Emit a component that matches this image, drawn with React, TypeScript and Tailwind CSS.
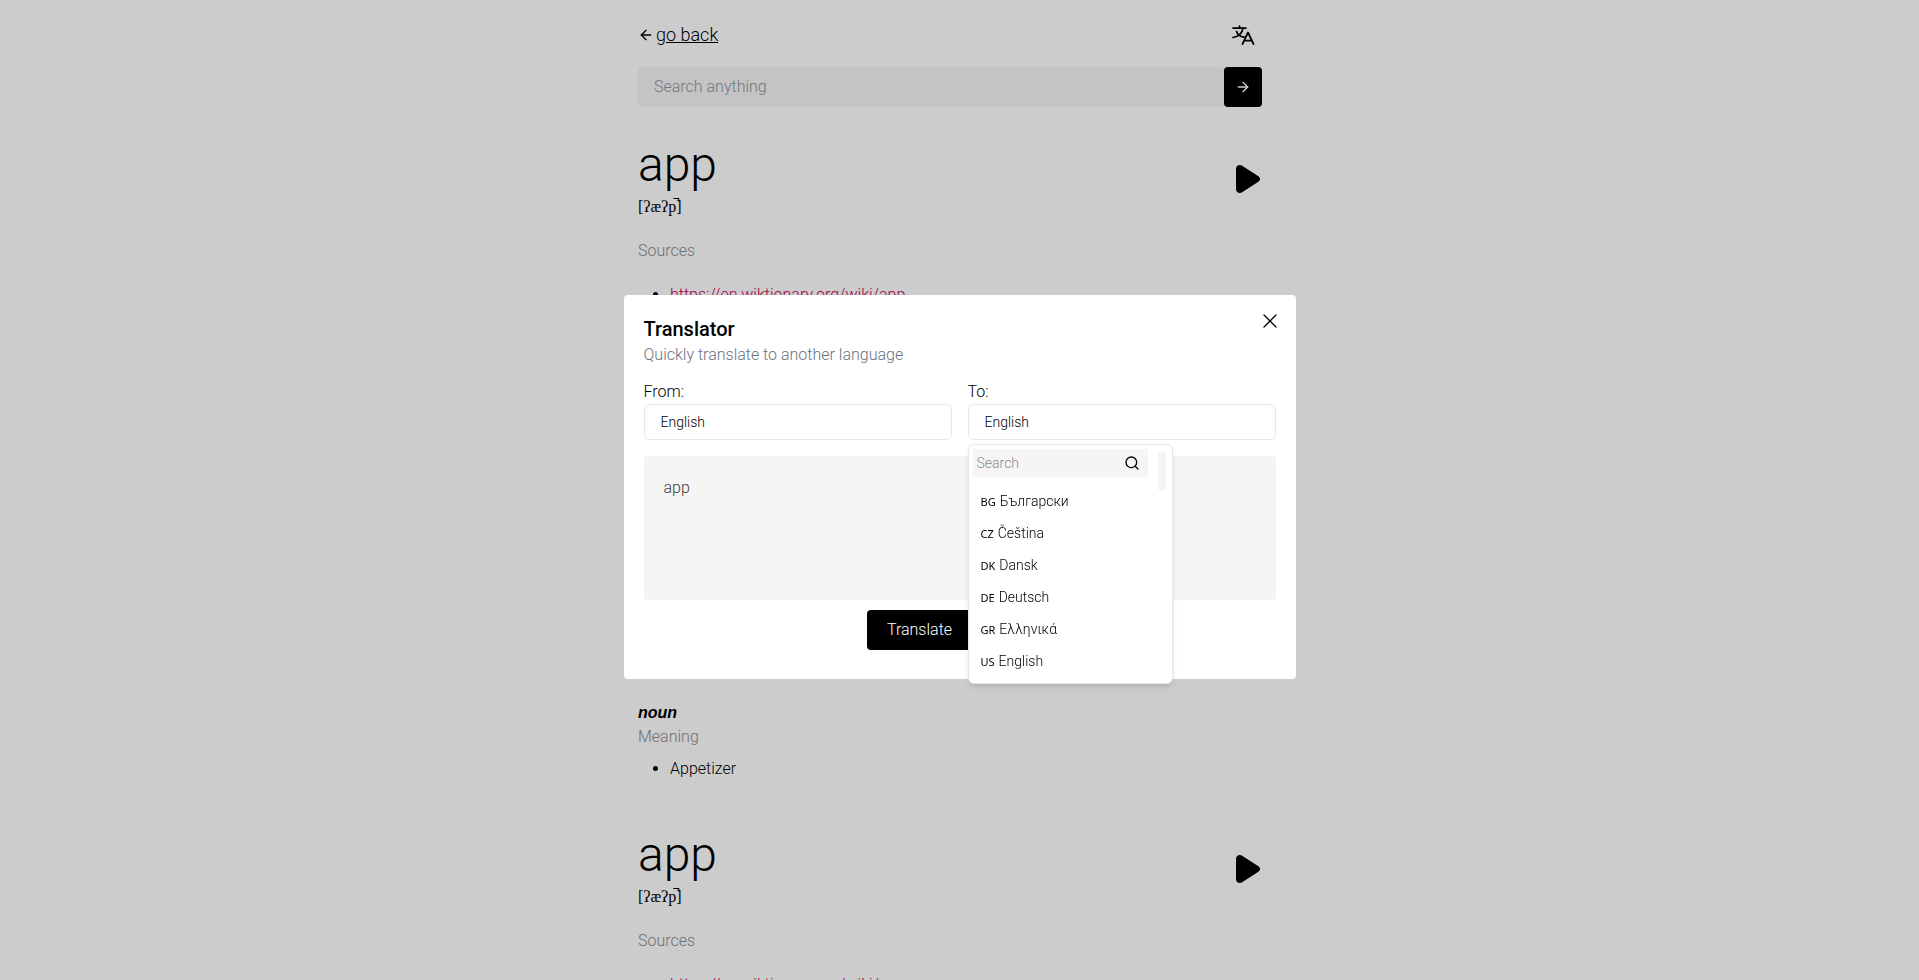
import { useState } from 'react';
import type { ReactNode } from 'react';
import { ArrowLeft, ArrowRight, Search, X } from 'lucide-react';

const LANGUAGES = [
  { code: 'bg', flag: 'BG', name: 'Български' },
  { code: 'cz', flag: 'CZ', name: 'Čeština' },
  { code: 'dk', flag: 'DK', name: 'Dansk' },
  { code: 'de', flag: 'DE', name: 'Deutsch' },
  { code: 'gr', flag: 'GR', name: 'Ελληνικά' },
  { code: 'us', flag: 'US', name: 'English' },
];

function LanguageIcon() {
  return (
    <svg
      viewBox="0 0 24 24"
      className="w-6 h-6"
      fill="none"
      stroke="currentColor"
      strokeWidth="1.75"
      strokeLinecap="round"
      strokeLinejoin="round"
      aria-hidden="true"
    >
      <path d="M2 5H15M8.500 3V5M12 5C11.500 10 7.500 14 2 14.500M5.500 8.500C6.500 11.500 9.500 13.500 13 14.200" />
      <path d="M11.500 21L17 9.500L22.500 21M13.200 17.500H20.800" />
    </svg>
  );
}

function PlayIcon() {
  return (
    <svg viewBox="0 0 24 28" className="w-6 h-7" fill="currentColor" aria-hidden="true">
      <path d="M0 4C0 .5 3.500-1 6.500.9L22 10.900C24.700 12.600 24.700 15.400 22 17.100L6.500 27.100C3.500 29 0 27.500 0 24Z" />
    </svg>
  );
}

function Header() {
  return (
    <header>
      <div className="flex items-center justify-between h-6">
        <a href="#" className="flex items-center gap-0.5 text-lg underline">
          <ArrowLeft className="w-4 h-4" />
          go back
        </a>
        <button type="button" aria-label="Open translator" className="mr-[7px]">
          <LanguageIcon />
        </button>
      </div>
      <form className="flex mt-5 h-10" onSubmit={(e) => e.preventDefault()}>
        <input
          type="search"
          aria-label="Search anything"
          placeholder="Search anything"
          className="flex-1 min-w-0 px-4 rounded-sm bg-neutral-100 placeholder:text-[#8f959f] outline-none"
        />
        <button
          type="submit"
          aria-label="Search"
          className="w-[38px] flex items-center justify-center rounded bg-black text-white"
        >
          <ArrowRight className="w-4 h-4" />
        </button>
      </form>
    </header>
  );
}

function Entry({ word, phonetic }: { word: string; phonetic: string }) {
  return (
    <article className="h-[690px] flex flex-col">
      <div className="flex items-center justify-between">
        <div>
          <h2 className="mb-1 text-5xl leading-[52px]">{word}</h2>
          <p className="font-['Liberation_Serif'] font-normal leading-6">{phonetic}</p>
        </div>
        <button type="button" aria-label="Play pronunciation" className="mr-0.5">
          <PlayIcon />
        </button>
      </div>
      <p className="mt-5 text-[#8c8c8c]">Sources</p>
      <ul className="mt-5 pl-8 list-disc">
        <li>
          <a href="https://en.wiktionary.org/wiki/app" className="text-pink-700">
            https://en.wiktionary.org/wiki/app
          </a>
        </li>
      </ul>
      <div className="mt-auto mb-12">
        <h3 className="font-['Liberation_Sans'] font-bold italic">noun</h3>
        <p className="text-[#8c8c8c]">Meaning</p>
        <ul className="mt-2 pl-8 list-disc">
          <li>Appetizer</li>
        </ul>
      </div>
    </article>
  );
}

function LanguageField({ id, label, children }: { id: string; label: string; children?: ReactNode }) {
  return (
    <div className="relative">
      <label htmlFor={id} className="block leading-6">
        {label}
      </label>
      <select
        id={id}
        className="block w-full h-9 px-4 appearance-none rounded-md border border-gray-200 bg-white text-sm"
      >
        <option>English</option>
      </select>
      {children}
    </div>
  );
}

function LanguageMenu() {
  return (
    <div className="absolute left-0 top-full mt-1 w-[205px] h-60 rounded-md border border-gray-200 bg-white shadow-md flex items-start justify-between p-1 pr-1.5 text-sm">
      <div className="w-[175px]">
        <div className="flex items-center h-7 px-1 bg-neutral-100">
          <input
            type="text"
            aria-label="Search language"
            placeholder="Search"
            className="flex-1 min-w-0 bg-transparent placeholder:text-[#8c8c8c] outline-none"
          />
          <Search className="w-4 h-4 mr-1" />
        </div>
        <ul className="mt-2">
          {LANGUAGES.map((lang) => (
            <li key={lang.code}>
              <button type="button" className="flex items-baseline gap-1 w-full h-8 pl-2 leading-8 text-left">
                <span className="font-['Noto_Sans'] font-normal text-[11px]">{lang.flag}</span>
                {lang.name}
              </button>
            </li>
          ))}
        </ul>
      </div>
      <div className="w-2 h-10 mt-0.5 rounded-full bg-neutral-100" />
    </div>
  );
}

function Translator() {
  const [text, setText] = useState('app');

  return (
    <div
      role="dialog"
      aria-labelledby="translator-title"
      className="relative w-full max-w-2xl p-5 pb-[29px] rounded bg-white"
    >
      <button type="button" aria-label="Close" className="absolute top-3.5 right-3.5">
        <X className="w-6 h-6" strokeWidth={1.25} />
      </button>
      <h1 id="translator-title" className="text-xl leading-7 font-medium">
        Translator
      </h1>
      <p className="leading-6 text-gray-500">Quickly translate to another language</p>
      <div className="grid grid-cols-2 gap-4 mt-[13px]">
        <LanguageField id="from" label="From:" />
        <LanguageField id="to" label="To:">
          <LanguageMenu />
        </LanguageField>
      </div>
      <textarea
        aria-label="Text to translate"
        value={text}
        onChange={(e) => setText(e.target.value)}
        className="block w-full h-36 mt-4 p-5 resize-none rounded-sm bg-neutral-100 text-neutral-700 outline-none"
      />
      <div className="flex justify-center mt-2.5 pr-20">
        <button type="button" className="h-10 px-5 rounded bg-black text-white">
          Translate
        </button>
      </div>
    </div>
  );
}

export default function App() {
  return (
    <div className="h-screen overflow-hidden bg-white text-black font-light font-['Roboto','Liberation_Sans',sans-serif]">
      <div className="pr-[19px]">
        <main className="max-w-2xl mx-auto px-6 pt-[23px]">
          <Header />
          <div className="mt-8">
            <Entry word="app" phonetic="[ʔæʔp̚]" />
            <Entry word="app" phonetic="[ʔæʔp̚]" />
          </div>
        </main>
      </div>
      <div className="fixed inset-0 flex items-center justify-center pb-1.5 bg-black/20">
        <Translator />
      </div>
    </div>
  );
}
